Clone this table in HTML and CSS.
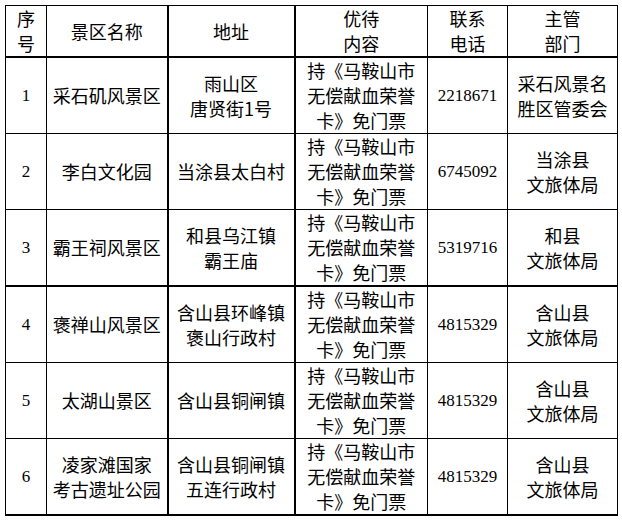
FILE: index.html
```html
<!DOCTYPE html>
<html lang="zh-CN">
<head>
<meta charset="utf-8">
<title>景区列表</title>
<link rel="stylesheet" href="styles.css">
</head>
<body>
<table class="sheet">
  <colgroup>
    <col class="c-no">
    <col class="c-name">
    <col class="c-addr">
    <col class="c-offer">
    <col class="c-tel">
    <col class="c-dept">
  </colgroup>
  <thead>
    <tr class="head">
      <th>序<br>号</th>
      <th class="thick-r">景区名称</th>
      <th class="thick-r">地址</th>
      <th>优待<br>内容</th>
      <th>联系<br>电话</th>
      <th>主管<br>部门</th>
    </tr>
  </thead>
  <tbody>
    <tr>
      <td class="num">1</td>
      <td class="thick-r">采石矶风景区</td>
      <td class="thick-r">雨山区<br>唐贤街1号</td>
      <td>持《马鞍山市<br>无偿献血荣誉<br>卡》免门票</td>
      <td class="num">2218671</td>
      <td>采石风景名<br>胜区管委会</td>
    </tr>
    <tr>
      <td class="num">2</td>
      <td class="thick-r">李白文化园</td>
      <td class="thick-r">当涂县太白村</td>
      <td>持《马鞍山市<br>无偿献血荣誉<br>卡》免门票</td>
      <td class="num">6745092</td>
      <td>当涂县<br>文旅体局</td>
    </tr>
    <tr class="thick-b">
      <td class="num">3</td>
      <td class="thick-r">霸王祠风景区</td>
      <td class="thick-r">和县乌江镇<br>霸王庙</td>
      <td>持《马鞍山市<br>无偿献血荣誉<br>卡》免门票</td>
      <td class="num">5319716</td>
      <td>和县<br>文旅体局</td>
    </tr>
    <tr>
      <td class="num">4</td>
      <td class="thick-r">褒禅山风景区</td>
      <td class="thick-r">含山县环峰镇<br>褒山行政村</td>
      <td>持《马鞍山市<br>无偿献血荣誉<br>卡》免门票</td>
      <td class="num">4815329</td>
      <td>含山县<br>文旅体局</td>
    </tr>
    <tr>
      <td class="num">5</td>
      <td class="thick-r">太湖山景区</td>
      <td class="thick-r">含山县铜闸镇</td>
      <td>持《马鞍山市<br>无偿献血荣誉<br>卡》免门票</td>
      <td class="num">4815329</td>
      <td>含山县<br>文旅体局</td>
    </tr>
    <tr class="last">
      <td class="num">6</td>
      <td class="thick-r">凌家滩国家<br>考古遗址公园</td>
      <td class="thick-r">含山县铜闸镇<br>五连行政村</td>
      <td>持《马鞍山市<br>无偿献血荣誉<br>卡》免门票</td>
      <td class="num">4815329</td>
      <td>含山县<br>文旅体局</td>
    </tr>
  </tbody>
</table>
</body>
</html>
```

FILE: styles.css
```css
html, body {
  margin: 0;
  padding: 0;
  background: #ffffff;
}

body {
  padding: 5px 0 0 5px;
  font-family: "Noto Sans CJK SC", "Noto Sans", sans-serif;
  color: #000000;
}

.sheet {
  border-collapse: collapse;
  table-layout: fixed;
  width: 612px;
  font-size: 18px;
  line-height: 25px;
}

.c-no { width: 41px; }
.c-name { width: 121px; }
.c-addr { width: 127px; }
.c-offer { width: 133px; }
.c-tel { width: 80px; }
.c-dept { width: 110px; }

.sheet th,
.sheet td {
  border: 1px solid #000000;
  padding: 0;
  text-align: center;
  vertical-align: middle;
  font-weight: normal;
}

.sheet .head th {
  height: 50px;
  border-top: 1px solid #000000;
  border-bottom: 2px solid #000000;
}

.sheet tbody td {
  height: 75px;
}

.sheet .thick-r {
  border-right: 2px solid #000000;
}

.sheet .thick-b td {
  border-bottom: 2px solid #000000;
}

.sheet .last td {
  border-bottom: 2px solid #000000;
}

.sheet .num {
  font-family: "Liberation Serif", "Times New Roman", serif;
  font-size: 17px;
}
```
